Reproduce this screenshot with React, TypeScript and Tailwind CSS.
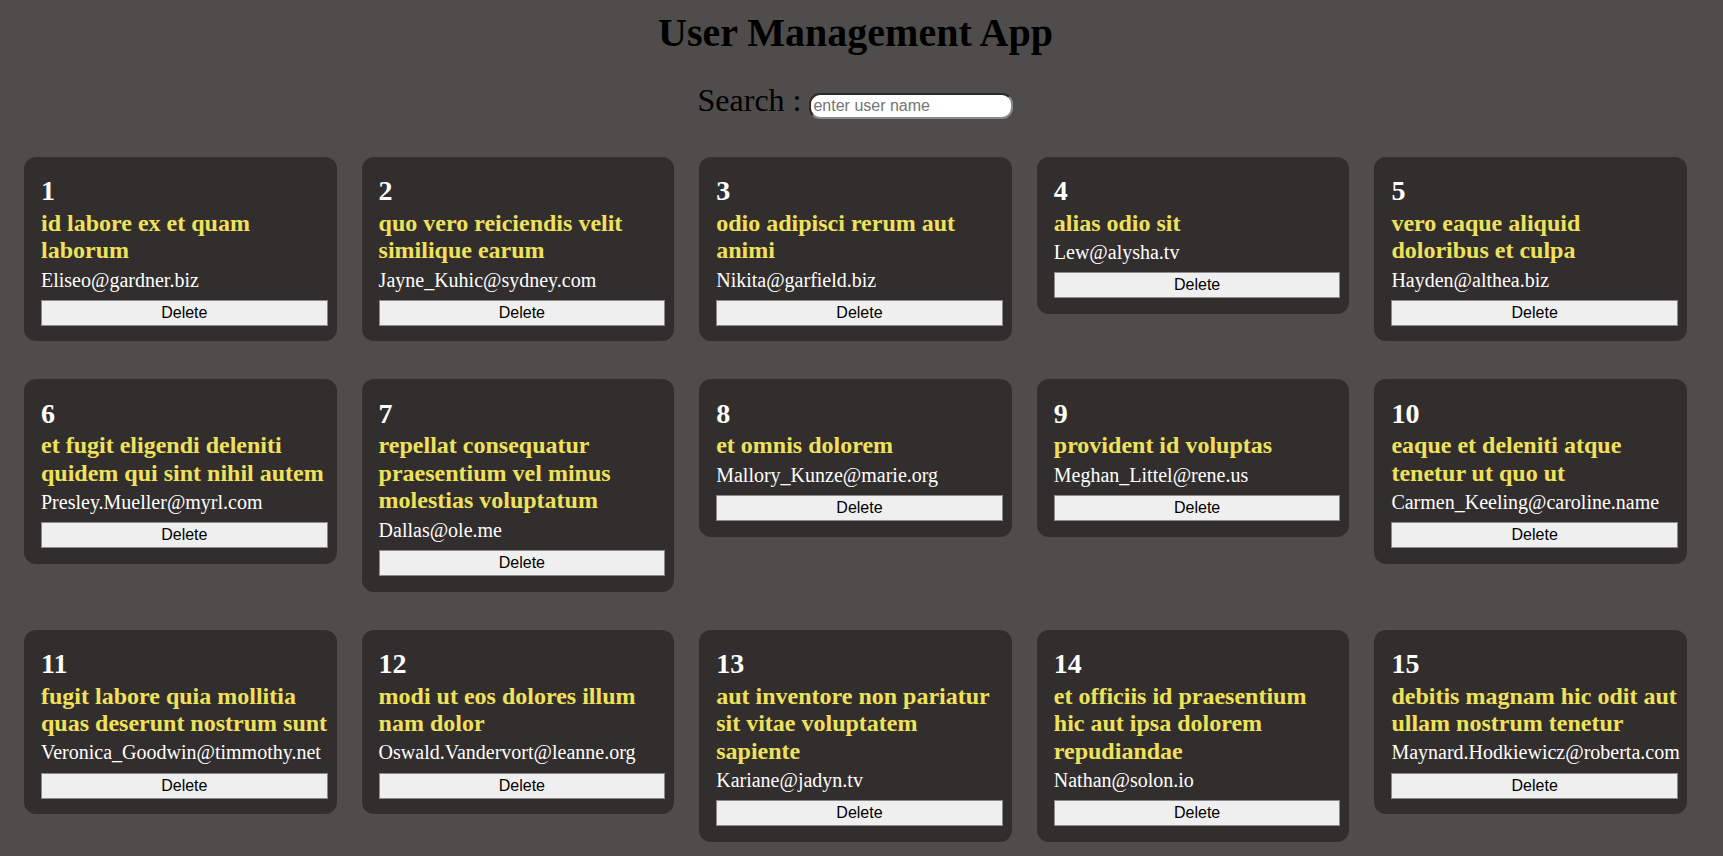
import { useState } from "react"

interface User {
  id: number
  title: string
  email: string
}

const initialUsers: User[] = [
  { id: 1, title: "id labore ex et quam laborum", email: "Eliseo@gardner.biz" },
  { id: 2, title: "quo vero reiciendis velit similique earum", email: "Jayne_Kuhic@sydney.com" },
  { id: 3, title: "odio adipisci rerum aut animi", email: "Nikita@garfield.biz" },
  { id: 4, title: "alias odio sit", email: "Lew@alysha.tv" },
  { id: 5, title: "vero eaque aliquid doloribus et culpa", email: "Hayden@althea.biz" },
  { id: 6, title: "et fugit eligendi deleniti quidem qui sint nihil autem", email: "Presley.Mueller@myrl.com" },
  { id: 7, title: "repellat consequatur praesentium vel minus molestias voluptatum", email: "Dallas@ole.me" },
  { id: 8, title: "et omnis dolorem", email: "Mallory_Kunze@marie.org" },
  { id: 9, title: "provident id voluptas", email: "Meghan_Littel@rene.us" },
  { id: 10, title: "eaque et deleniti atque tenetur ut quo ut", email: "Carmen_Keeling@caroline.name" },
  { id: 11, title: "fugit labore quia mollitia quas deserunt nostrum sunt", email: "Veronica_Goodwin@timmothy.net" },
  { id: 12, title: "modi ut eos dolores illum nam dolor", email: "Oswald.Vandervort@leanne.org" },
  { id: 13, title: "aut inventore non pariatur sit vitae voluptatem sapiente", email: "Kariane@jadyn.tv" },
  { id: 14, title: "et officiis id praesentium hic aut ipsa dolorem repudiandae", email: "Nathan@solon.io" },
  { id: 15, title: "debitis magnam hic odit aut ullam nostrum tenetur", email: "Maynard.Hodkiewicz@roberta.com" },
]

const UserCard = ({ user, onDelete }: { user: User; onDelete: (id: number) => void }) => {
  return (
    <div className="rounded-xl bg-[#322e2e] pt-[18.5px] pb-[15.7px] pl-[17px] pr-[9px]">
      <div className="text-[28px] leading-[32px] font-bold text-white">{user.id}</div>
      <div className="mt-[2.3px] text-[24px] leading-[27.6px] font-bold text-[#efe25a]">{user.title}</div>
      <div className="mt-[3.75px] text-[20px] leading-[23px] text-white">{user.email}</div>
      <button
        onClick={() => onDelete(user.id)}
        className="mt-[8.25px] block h-[26px] w-full border border-[#8a8a8a] bg-[#efefef] font-['Liberation_Sans',Arial,sans-serif] text-[16px] leading-[18px] text-black"
      >
        Delete
      </button>
    </div>
  )
}

export default function App() {
  const [users, setUsers] = useState<User[]>(initialUsers)
  const [query, setQuery] = useState("")

  const filtered = users.filter((u) => u.email.toLowerCase().includes(query.toLowerCase()))

  return (
    <div className="min-h-screen bg-[#4e4d4b] pr-[12px] pb-[16px] font-['Liberation_Serif','Times_New_Roman',serif]">
      <h1 className="pt-[10px] text-center text-[40px] leading-[46px] font-bold text-black">User Management App</h1>

      <div className="mt-[26.2px] flex items-start justify-center">
        <span className="text-[32px] leading-[37px] text-black whitespace-pre">Search : </span>
        <input
          value={query}
          onChange={(e) => setQuery(e.target.value)}
          placeholder="enter user name"
          className="mt-[10.9px] h-[26px] w-[204px] rounded-[11px] border-2 border-t-[#2a2a2a] border-l-[#2a2a2a] border-r-[#8a8a8a] border-b-[#8a8a8a] bg-white px-[2px] font-['Liberation_Sans',Arial,sans-serif] text-[16px] text-black outline-none placeholder:text-[#757575]"
        />
      </div>

      <div className="mt-[37.6px] grid grid-cols-5 items-start gap-x-[25px] gap-y-[38px] px-[24px]">
        {filtered.map((user) => (
          <UserCard key={user.id} user={user} onDelete={(id) => setUsers(users.filter((u) => u.id !== id))} />
        ))}
      </div>
    </div>
  )
}
